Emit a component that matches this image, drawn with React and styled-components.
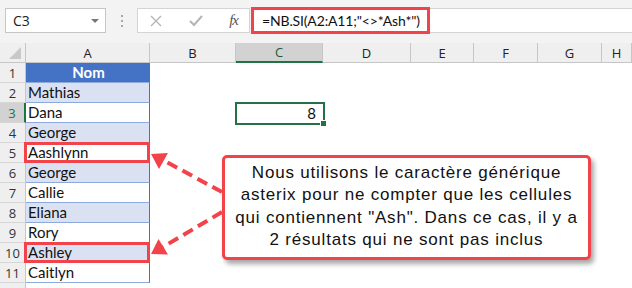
import React from 'react';
import styled, { createGlobalStyle } from 'styled-components';

const GlobalStyle = createGlobalStyle`
  html, body {
    margin: 0;
    padding: 0;
    background: #fff;
  }
  body {
    font-family: 'Liberation Sans', Arial, sans-serif;
    width: 632px;
    height: 288px;
    overflow: hidden;
  }
`;

const COLS = '26px 124px 86px 87px 88px 63px 64px 64px 1fr';
const RED = '#f2434a';
const GREEN = '#217346';

const Page = styled.div`
  position: relative;
  width: 632px;
  height: 288px;
  overflow: hidden;
  background: #fff;
`;

const Toolbar = styled.div`
  height: 43px;
  box-sizing: border-box;
  background: #f3f3f3;
  display: flex;
  align-items: flex-start;
  padding: 8px 0 0 5px;
`;

const NameBox = styled.div`
  width: 101px;
  height: 25px;
  box-sizing: border-box;
  background: #fff;
  border: 1px solid #c6c6c6;
  display: flex;
  align-items: center;
  justify-content: space-between;
  padding: 0 6px 0 7px;
  font-family: 'Open Sans', 'Noto Sans', sans-serif;
  font-size: 14px;
  color: #222;
`;

const Caret = styled.span`
  width: 0;
  height: 0;
  border-left: 4px solid transparent;
  border-right: 4px solid transparent;
  border-top: 4px solid #777;
`;

const Grip = styled.div`
  width: 31px;
  height: 25px;
  display: flex;
  flex-direction: column;
  align-items: center;
  justify-content: center;
  gap: 3px;

  span {
    width: 2px;
    height: 2px;
    background: #a8a8a8;
  }
`;

const FxBox = styled.div`
  width: 113px;
  height: 25px;
  box-sizing: border-box;
  background: #fff;
  border: 1px solid #d4d4d4;
  display: flex;
  align-items: center;
  padding: 0 11px 0 12px;
  justify-content: space-between;
`;

const Fx = styled.span`
  font-family: 'Liberation Serif', serif;
  font-style: italic;
  font-size: 15px;
  color: #555;
  letter-spacing: -1px;
`;

const FormulaBar = styled.div`
  flex: 1;
  height: 25px;
  margin-left: 1px;
  box-sizing: border-box;
  background: #fff;
  border-top: 1px solid #d4d4d4;
  border-bottom: 1px solid #d4d4d4;
  position: relative;
`;

const FormulaHighlight = styled.div`
  position: absolute;
  left: 0;
  top: -2px;
  height: 27px;
  box-sizing: border-box;
  border: 3px solid ${RED};
  display: flex;
  align-items: center;
  padding: 0 7px 0 8px;
  font-family: Lato, 'Noto Sans', sans-serif;
  font-size: 14px;
  letter-spacing: -0.15px;
  color: #111;
  white-space: nowrap;
`;

const Grid = styled.div`
  display: grid;
  grid-template-columns: ${COLS};
  grid-auto-rows: 20px;
`;

const ColHead = styled.div`
  box-sizing: border-box;
  background: ${(p) => (p.$active ? '#d2d2d2' : '#efefef')};
  border-right: 1px solid #c6c6c6;
  border-bottom: ${(p) => (p.$active ? `2px solid ${GREEN}` : '1px solid #c6c6c6')};
  display: flex;
  align-items: center;
  justify-content: center;
  font-family: 'Open Sans', 'Noto Sans', sans-serif;
  font-size: 13px;
  color: ${(p) => (p.$active ? '#1d5c3a' : '#222')};
  position: relative;
`;

const Corner = styled(ColHead)`
  &::after {
    content: '';
    position: absolute;
    right: 4px;
    bottom: 3px;
    width: 0;
    height: 0;
    border-left: 12px solid transparent;
    border-bottom: 12px solid #c8c8c8;
  }
`;

const RowHead = styled.div`
  box-sizing: border-box;
  background: ${(p) => (p.$active ? '#d2d2d2' : '#efefef')};
  border-right: ${(p) => (p.$active ? `2px solid ${GREEN}` : '1px solid #c6c6c6')};
  border-bottom: 1px solid #d6d6d6;
  display: flex;
  align-items: center;
  justify-content: center;
  font-family: 'Open Sans', 'Noto Sans', sans-serif;
  font-size: 13px;
  color: ${(p) => (p.$active ? GREEN : '#333')};
`;

const NameCell = styled.div`
  position: relative;
  box-sizing: border-box;
  border-right: 1px solid #4472c4;
  border-bottom: 1px solid #8ea9db;
  background: ${(p) => (p.$head ? '#4472c4' : p.$band ? '#d9e1f2' : '#fff')};
  color: ${(p) => (p.$head ? '#fff' : '#111')};
  font-weight: ${(p) => (p.$head ? 700 : 400)};
  text-align: ${(p) => (p.$head ? 'center' : 'left')};
  font-family: Lato, 'Noto Sans', sans-serif;
  font-size: 15px;
  line-height: 19px;
  padding-left: 2px;

  ${(p) =>
    p.$marked &&
    `
    &::after {
      content: '';
      position: absolute;
      left: -2px;
      top: -1px;
      right: -1px;
      bottom: -1px;
      border: 3px solid ${RED};
    }
  `}
`;

const Cell = styled.div`
  position: relative;
  font-family: Lato, 'Noto Sans', sans-serif;
  font-size: 15px;
  line-height: 20px;
  text-align: right;
  padding-right: 7px;
  color: #111;
`;

const Selection = styled.div`
  position: absolute;
  left: -1px;
  top: -1px;
  right: -2px;
  bottom: -2px;
  border: 2px solid ${GREEN};

  &::after {
    content: '';
    position: absolute;
    right: -4px;
    bottom: -4px;
    width: 5px;
    height: 5px;
    background: ${GREEN};
    border: 1px solid #fff;
  }
`;

const Callout = styled.div`
  position: absolute;
  left: 222px;
  top: 155px;
  width: 369px;
  height: 105px;
  box-sizing: border-box;
  border: 3px solid ${RED};
  border-radius: 5px;
  background: #fff;
  box-shadow: 3px 4px 5px rgba(0, 0, 0, 0.35);
  display: flex;
  align-items: center;
  justify-content: center;
  text-align: center;
  font-family: 'Liberation Sans', Arial, sans-serif;
  font-size: 17px;
  letter-spacing: 0.8px;
  line-height: 22.5px;
  color: #111;
  padding: 0 2px 2px;
  white-space: nowrap;
`;

const Arrows = styled.svg`
  position: absolute;
  left: 0;
  top: 0;
  pointer-events: none;
`;

const names = ['Mathias', 'Dana', 'George', 'Aashlynn', 'George', 'Callie', 'Eliana', 'Rory', 'Ashley', 'Caitlyn'];
const letters = ['A', 'B', 'C', 'D', 'E', 'F', 'G', 'H'];

export default function App() {
  const rows = [];
  for (let r = 1; r <= 12; r++) {
    const name = r === 1 ? 'Nom' : names[r - 2];
    rows.push(
      <React.Fragment key={r}>
        <RowHead $active={r === 3}>{r < 12 ? r : ''}</RowHead>
        {name !== undefined ? (
          <NameCell $head={r === 1} $band={r % 2 === 0} $marked={r === 5 || r === 10}>
            {name}
          </NameCell>
        ) : (
          <Cell />
        )}
        <Cell />
        <Cell>
          {r === 3 && (
            <>
              8
              <Selection />
            </>
          )}
        </Cell>
        <Cell />
        <Cell />
        <Cell />
        <Cell />
        <Cell />
      </React.Fragment>
    );
  }

  return (
    <Page>
      <GlobalStyle />
      <Toolbar>
        <NameBox>
          C3
          <Caret />
        </NameBox>
        <Grip>
          <span />
          <span />
          <span />
        </Grip>
        <FxBox>
          <svg width="12" height="12" viewBox="0 0 12 12">
            <path d="M1 1 L11 11 M11 1 L1 11" stroke="#b5b5b5" strokeWidth="1.4" fill="none" />
          </svg>
          <svg width="14" height="12" viewBox="0 0 14 12">
            <path d="M1 6 L5 10 L13 1" stroke="#b5b5b5" strokeWidth="2" fill="none" />
          </svg>
          <Fx>fx</Fx>
        </FxBox>
        <FormulaBar>
          <FormulaHighlight>=NB.SI(A2:A11;"&lt;&gt;*Ash*")</FormulaHighlight>
        </FormulaBar>
      </Toolbar>
      <Grid>
        <Corner />
        {letters.map((l) => (
          <ColHead key={l} $active={l === 'C'}>
            {l}
          </ColHead>
        ))}
        {rows}
      </Grid>
      <Callout>
        Nous utilisons le caractère générique
        <br />
        asterix pour ne compter que les cellules
        <br />
        qui contiennent "Ash". Dans ce cas, il y a
        <br />
        2 résultats qui ne sont pas inclus
      </Callout>
      <Arrows width="632" height="288" viewBox="0 0 632 288">
        <g stroke={RED} strokeWidth="4" strokeDasharray="11 6" fill="none">
          <line x1="222" y1="192" x2="163" y2="160" />
          <line x1="222" y1="212" x2="163" y2="247" />
        </g>
        <g fill={RED}>
          <polygon points="151,154 168,153 159,169" />
          <polygon points="151,254 168,254.5 158.5,239" />
        </g>
      </Arrows>
    </Page>
  );
}
